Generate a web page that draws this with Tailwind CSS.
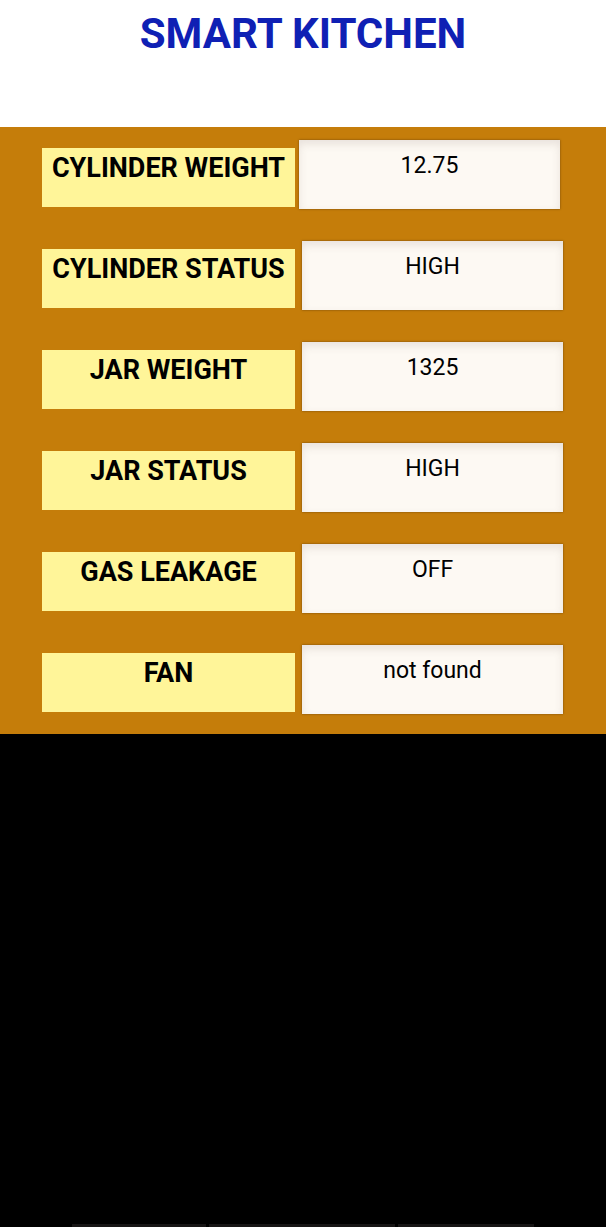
<!DOCTYPE html>
<html lang="en">
<head>
<meta charset="utf-8">
<meta name="viewport" content="width=device-width, initial-scale=1">
<title>Smart Kitchen</title>
<script src="https://cdn.jsdelivr.net/npm/@tailwindcss/browser@4"></script>
</head>
<body class="flex min-h-screen flex-col bg-black font-['Roboto',sans-serif] text-black">
<header class="bg-white pt-2 pb-17">
<h1 class="text-center text-[42px] leading-[51px] font-bold text-[#0f20b4]">SMART KITCHEN</h1>
</header>
<main class="flex flex-col gap-8 bg-[#c57d0a] pt-[13px] pr-[43px] pb-5 pl-[42px]">
<div class="flex items-end gap-1 pr-[3px]">
<label for="cw" class="mb-0.5 h-[59px] flex-[253] bg-[#fff599] pt-1 text-center text-[27px] leading-8 font-bold whitespace-nowrap">CYLINDER WEIGHT</label>
<input id="cw" value="12.75" class="h-[69px] min-w-0 flex-[261] bg-[#fdf9f3] pt-1.5 pb-6 text-center text-[23px] shadow-[inset_0_4px_8px_rgba(90,70,60,0.13),0_0_2px_rgba(80,50,10,0.7)] outline-none">
</div>
<div class="flex items-end gap-[7px]">
<label for="cs" class="mb-0.5 h-[59px] flex-[253] bg-[#fff599] pt-1 text-center text-[27px] leading-8 font-bold whitespace-nowrap">CYLINDER STATUS</label>
<input id="cs" value="HIGH" class="h-[69px] min-w-0 flex-[261] bg-[#fdf9f3] pt-1.5 pb-6 text-center text-[23px] shadow-[inset_0_4px_8px_rgba(90,70,60,0.13),0_0_2px_rgba(80,50,10,0.7)] outline-none">
</div>
<div class="flex items-end gap-[7px]">
<label for="jw" class="mb-0.5 h-[59px] flex-[253] bg-[#fff599] pt-1 text-center text-[27px] leading-8 font-bold whitespace-nowrap">JAR WEIGHT</label>
<input id="jw" value="1325" class="h-[69px] min-w-0 flex-[261] bg-[#fdf9f3] pt-1.5 pb-6 text-center text-[23px] shadow-[inset_0_4px_8px_rgba(90,70,60,0.13),0_0_2px_rgba(80,50,10,0.7)] outline-none">
</div>
<div class="flex items-end gap-[7px]">
<label for="js" class="mb-0.5 h-[59px] flex-[253] bg-[#fff599] pt-1 text-center text-[27px] leading-8 font-bold whitespace-nowrap">JAR STATUS</label>
<input id="js" value="HIGH" class="h-[69px] min-w-0 flex-[261] bg-[#fdf9f3] pt-1.5 pb-6 text-center text-[23px] shadow-[inset_0_4px_8px_rgba(90,70,60,0.13),0_0_2px_rgba(80,50,10,0.7)] outline-none">
</div>
<div class="flex items-end gap-[7px]">
<label for="gl" class="mb-0.5 h-[59px] flex-[253] bg-[#fff599] pt-1 text-center text-[27px] leading-8 font-bold whitespace-nowrap">GAS LEAKAGE</label>
<input id="gl" value="OFF" class="h-[69px] min-w-0 flex-[261] bg-[#fdf9f3] pt-1.5 pb-6 text-center text-[23px] shadow-[inset_0_4px_8px_rgba(90,70,60,0.13),0_0_2px_rgba(80,50,10,0.7)] outline-none">
</div>
<div class="flex items-end gap-[7px]">
<label for="fan" class="mb-0.5 h-[59px] flex-[253] bg-[#fff599] pt-1 text-center text-[27px] leading-8 font-bold whitespace-nowrap">FAN</label>
<input id="fan" value="not found" class="h-[69px] min-w-0 flex-[261] bg-[#fdf9f3] pt-1.5 pb-6 text-center text-[23px] shadow-[inset_0_4px_8px_rgba(90,70,60,0.13),0_0_2px_rgba(80,50,10,0.7)] outline-none">
</div>
</main>
<footer class="mt-auto flex h-[3px] gap-[3px] px-[72px]">
<span class="flex-[134] bg-[#171515]"></span>
<span class="flex-[187] bg-[#171515]"></span>
<span class="flex-[136] bg-[#171515]"></span>
</footer>
</body>
</html>
